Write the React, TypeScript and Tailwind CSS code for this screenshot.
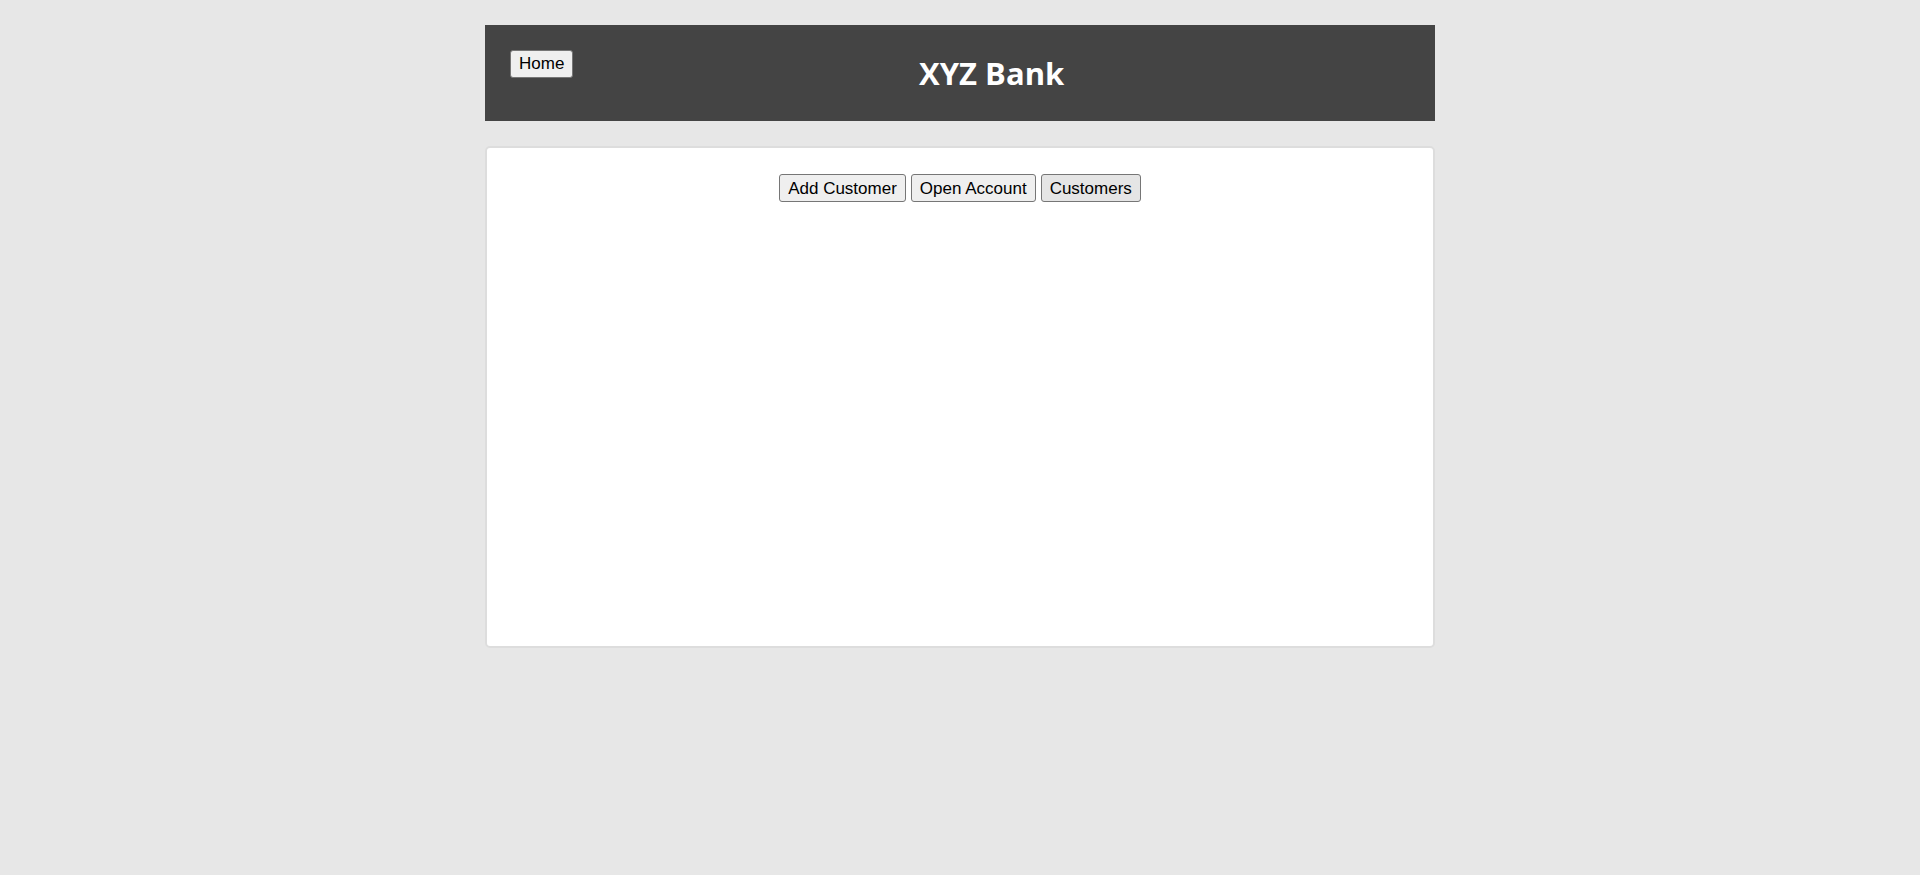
import React from "react";

const btn =
  "h-[28px] px-[8px] text-[17px] leading-none text-black border border-[#767676] rounded-[3px] cursor-pointer";

export default function App() {
  return (
    <div
      className="min-h-[875px] w-full bg-[#e7e7e7]"
      style={{ fontFamily: '"Liberation Sans", Arial, sans-serif' }}
    >
      <div className="mx-auto w-[950px] pt-[25px]">
        <header className="flex h-[96px] bg-[#444444] px-[25px]">
          <div className="pt-[25px]">
            <button className={`${btn} bg-[#efefef] pb-[1px]`}>Home</button>
          </div>
          <div className="flex flex-1 items-center justify-center pt-[1px]">
            <h1
              className="text-[31px] font-bold leading-none text-white"
              style={{ fontFamily: '"Open Sans", "Noto Sans", sans-serif' }}
            >
              XYZ Bank
            </h1>
          </div>
        </header>
        <main className="mt-[25px] h-[502px] rounded-[5px] border-2 border-[#dddddd] bg-white pt-[26px]">
          <div className="flex justify-center gap-[5px]">
            <button className={`${btn} bg-[#efefef]`}>Add Customer</button>
            <button className={`${btn} bg-[#efefef]`}>Open Account</button>
            <button className={`${btn} bg-[#e5e5e5] border-[#4f4f4f]`}>Customers</button>
          </div>
        </main>
      </div>
    </div>
  );
}
